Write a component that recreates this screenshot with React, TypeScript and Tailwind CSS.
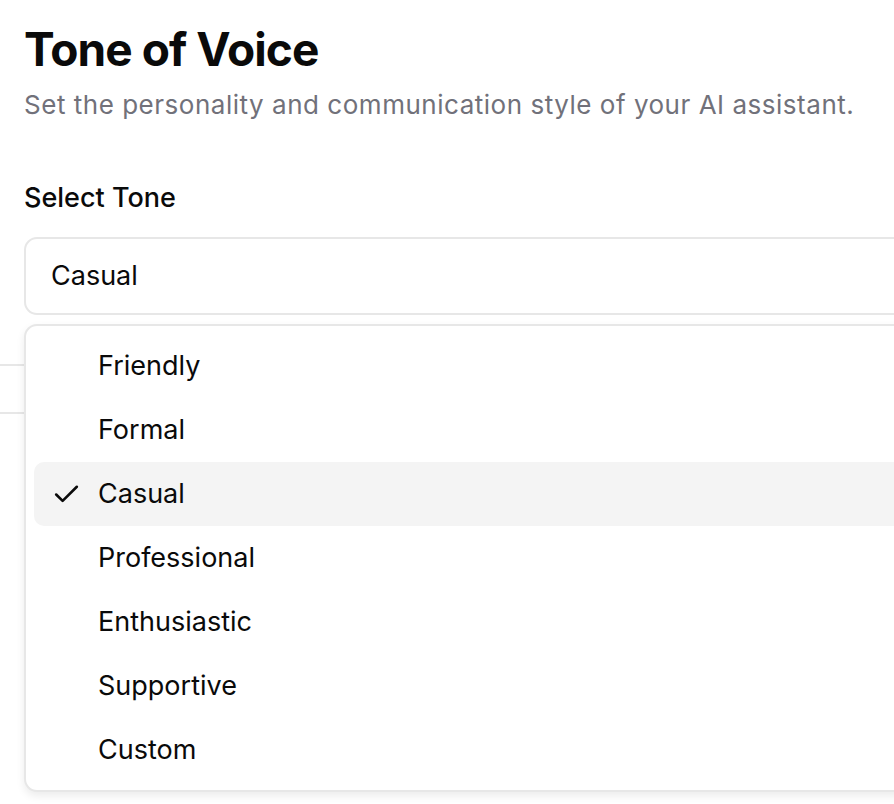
import React, { useState } from 'react';
import { Check } from 'lucide-react';

const tones = ['Friendly', 'Formal', 'Casual', 'Professional', 'Enthusiastic', 'Supportive', 'Custom'];

export default function App() {
  const [tone, setTone] = useState('Casual');

  return (
    <div
      className="relative w-[894px] h-[804px] overflow-hidden bg-white text-[#0a0a0a]"
      style={{ fontFamily: 'Inter, "Noto Sans", sans-serif' }}
    >
      <div className="w-[1100px] px-6 pt-[21px]">
        <h1 className="text-[46px] leading-[56px] font-bold tracking-[-0.02em]">Tone of Voice</h1>
        <p className="mt-[12px] text-[26px] leading-[32px] tracking-[0.02em] text-[#71717a]">
          Set the personality and communication style of your AI assistant.
        </p>

        <div className="mt-[61px]">
          <label className="block text-[27px] leading-[32px] font-medium">Select Tone</label>

          <div className="mt-[23px] h-[78px] rounded-[13px] border-2 border-[#e7e7e7] flex items-center px-[25px] text-[27px]">
            {tone}
          </div>

          {/* field that sits behind the open list */}
          <div className="relative">
            <div className="absolute left-[-24px] top-[40px] w-[1100px] h-[50px] border-y-2 border-[#e7e7e7]" />

            <div className="relative mt-[9px] rounded-[13px] border-2 border-[#e7e7e7] bg-white p-[8px] shadow-[0_4px_8px_rgba(0,0,0,0.08)]">
              {tones.map((t) => (
                <div
                  key={t}
                  onClick={() => setTone(t)}
                  className={`flex items-center h-[64px] rounded-[10px] text-[27px] ${
                    t === tone ? 'bg-[#f4f4f4]' : ''
                  }`}
                >
                  <span className="w-[64px] flex justify-center pl-[1px]">
                    {t === tone && <Check size={31} strokeWidth={2} />}
                  </span>
                  {t}
                </div>
              ))}
            </div>
          </div>
        </div>
      </div>
    </div>
  );
}
